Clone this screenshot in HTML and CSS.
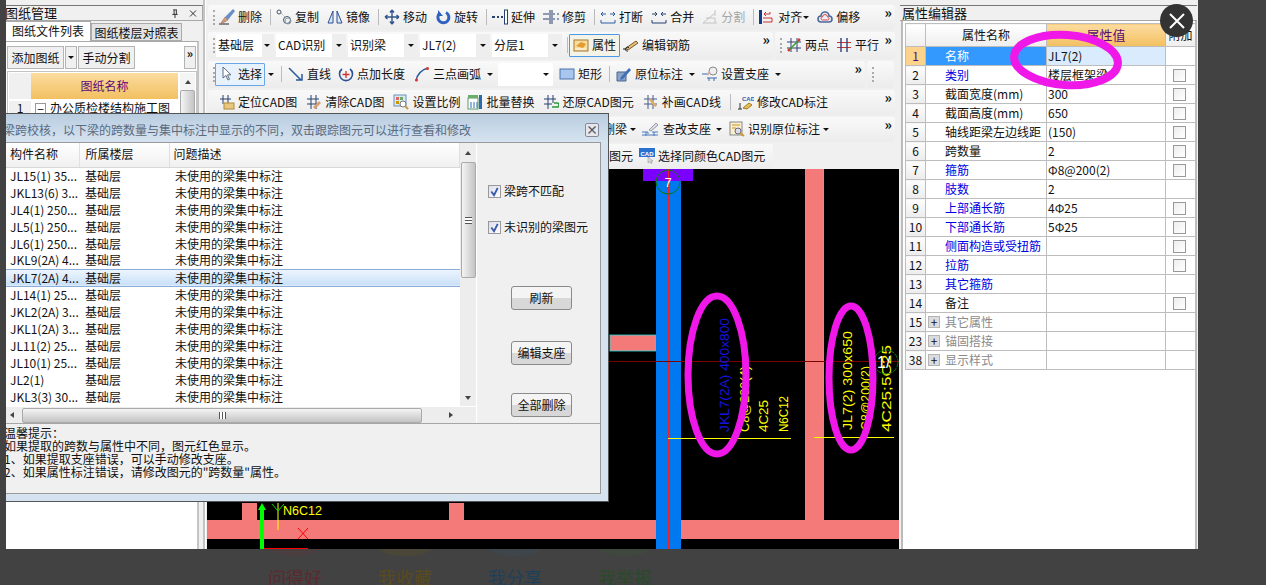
FILE: index.html
```html
<!DOCTYPE html>
<html>
<head>
    <link rel="stylesheet" href="styles.css">
</head>
<body>
    <!-- icon sprite -->
    <svg class="sprite">
        <symbol id="i-del" viewBox="0 0 16 16"><path d="M0 15h10" stroke="#223" fill="none"/><path d="M2 14l4-6 3 3-5 3z" fill="#c9a070" stroke="#a55"  stroke-width=".5"/><path d="M6 8l8-8 2 2-7 9z" fill="#6a8fc8"/></symbol>
        <symbol id="i-copy" viewBox="0 0 16 16"><circle cx="3" cy="3" r="2" fill="none" stroke="#456"/><circle cx="11" cy="11" r="3.500" fill="none" stroke="#456"/><circle cx="12" cy="12" r="3" fill="none" stroke="#89a"/><path d="M5 4l4 4" stroke="#89a" stroke-dasharray="1 1"/></symbol>
        <symbol id="i-mirror" viewBox="0 0 16 16"><path d="M6 2L1 14h5zM10 2l5 12h-5z" fill="#dde6f5" stroke="#2a4f96"/></symbol>
        <symbol id="i-move" viewBox="0 0 16 16"><path d="M8 1v14M1 8h14M8 1L6 3.500M8 1l2 2.500M8 15l-2-2.500M8 15l2-2.500M1 8l2.500-2M1 8l2.500 2M15 8l-2.500-2M15 8l-2.500 2" stroke="#31548a" stroke-width="1.400" fill="none"/></symbol>
        <symbol id="i-rotate" viewBox="0 0 16 16"><path d="M5 4a5.500 5.500 0 1 0 6-.5" stroke="#2f62c0" stroke-width="3" fill="none"/><path d="M3 1v6h5z" fill="#2f62c0"/></symbol>
        <symbol id="i-extend" viewBox="0 0 16 16"><path d="M0 8h3M5 8h2M9 8h2" stroke="#27406e" stroke-width="2"/><rect x="12.500" y="1" width="3" height="14" fill="#fff" stroke="#27406e"/></symbol>
        <symbol id="i-trim" viewBox="0 0 16 16"><path d="M0 5h6M0 10h6M10 5h2M14 5h2M10 10h2M14 10h2" stroke="#27406e"/><path d="M7 1v14M9 1v14" stroke="#27406e"/></symbol>
        <symbol id="i-break" viewBox="0 0 16 16"><path d="M1 11v3h14v-3M1 5h5M10 5h5M3 3L1 5l2 2M13 3l2 2-2 2" stroke="#2a5ca8" fill="none"/></symbol>
        <symbol id="i-merge" viewBox="0 0 16 16"><path d="M1 11v3h14v-3M1 5h5M10 5h5M4 3l2 2-2 2M12 3l-2 2 2 2" stroke="#27406e" fill="none"/></symbol>
        <symbol id="i-split" viewBox="0 0 16 16"><path d="M1 14h14M1 14l12-10M4 9h9v5M13 1v6" stroke="#c4c4c4" fill="none"/></symbol>
        <symbol id="i-align" viewBox="0 0 16 16"><path d="M1.500 1v14" stroke="#123a8a" stroke-width="3"/><path d="M5 5h6v-2M5 5l2-2M5 5l2 2M4 13h9V9H4" stroke="#c33" fill="none"/></symbol>
        <symbol id="i-offset" viewBox="0 0 16 16"><path d="M4 13a3 3 0 0 1 0-6 4 4 0 0 1 8 0 3 3 0 0 1 0 6z" fill="#eaf0f8" stroke="#4a6a9a" stroke-width="1.600"/><path d="M5.500 11a1.500 1.500 0 0 1 0-3 2.500 2.500 0 0 1 5 0 1.500 1.500 0 0 1 0 3z" fill="none" stroke="#d44"/></symbol>
        <symbol id="i-attr" viewBox="0 0 16 16"><rect x="1" y="3" width="14" height="11" fill="#f6dc9e" stroke="#a9772c"/><path d="M3 9l5-4 5 2-3 4z" fill="#e49a2c"/><path d="M2 12h11" stroke="#fff"/></symbol>
        <symbol id="i-rebar" viewBox="0 0 16 16"><path d="M0 12h4" stroke="#222"/><path d="M3 11l10-7 2 2-10 7z" fill="#e6c07a" stroke="#7a5a2a"/><path d="M5 14a2 2 0 1 1 1-3" fill="none" stroke="#222"/></symbol>
        <symbol id="i-two" viewBox="0 0 16 16"><path d="M1 5h14M1 11h14M5 1v14M11 1v14" stroke="#30417a"/><path d="M2 14L14 2" stroke="#3a9a2a" stroke-width="1.500"/><circle cx="3" cy="13" r="1.400" fill="#d33"/><circle cx="13" cy="3" r="1.400" fill="#d33"/></symbol>
        <symbol id="i-parallel" viewBox="0 0 16 16"><path d="M1 5.500h14M1 10.500h14" stroke="#c33"/><path d="M5 1v14M11 1v14" stroke="#30417a" stroke-width="1.400"/></symbol>
        <symbol id="i-cursor" viewBox="0 0 16 16"><path d="M1 1v11l3-2.500 2 4.500 1.500-.7-2-4.500H9z" fill="#fff" stroke="#5c6a80"/></symbol>
        <symbol id="i-line" viewBox="0 0 16 16"><path d="M1 2l12 12M14 8v6H8" stroke="#2a5a9a" stroke-width="1.500" fill="none"/></symbol>
        <symbol id="i-addlen" viewBox="0 0 16 16"><path d="M4 3a6.500 6.500 0 1 0 8 0" stroke="#2a4f96" stroke-width="1.600" fill="none"/><path d="M8 5v7M4.500 8.500h7" stroke="#c33" stroke-width="1.300"/></symbol>
        <symbol id="i-arc" viewBox="0 0 16 16"><path d="M2 15C3 8 7 4 14 2" stroke="#2a5a9a" stroke-width="1.500" fill="none"/><circle cx="2.500" cy="14" r="1.500" fill="#d33"/><circle cx="13.500" cy="2.500" r="1.500" fill="#d33"/></symbol>
        <symbol id="i-rect" viewBox="0 0 16 16"><rect x="1" y="3" width="14" height="10" fill="#a9c6ee" stroke="#4a72b0"/></symbol>
        <symbol id="i-mark" viewBox="0 0 16 16"><path d="M1 6h9v9H1z" fill="#8aa4c8" stroke="#4a6490"/><path d="M5 11l8-9 2 2-8 9-3 1z" fill="#3f6fb8"/></symbol>
        <symbol id="i-support" viewBox="0 0 16 16"><path d="M0 8h6M5 12h10M7 12v3M12 12v3" stroke="#3a6ab0" fill="none"/><circle cx="11" cy="5" r="4" fill="#eee" stroke="#8a8a8a"/><path d="M5 9l3-3" stroke="#caa" stroke-width="2"/></symbol>
        <symbol id="i-locate" viewBox="0 0 16 16"><path d="M1 5h11M4 1v9M9 1v9" stroke="#27406e"/><rect x="5" y="9" width="10" height="6" fill="#e8c880" stroke="#b08a3a"/></symbol>
        <symbol id="i-clear" viewBox="0 0 16 16"><path d="M1 5h12M1 10h12M5 1v14M10 1v14" stroke="#27406e"/><path d="M7 13l6-6 2 2-6 6z" fill="#d8a070"/></symbol>
        <symbol id="i-scale" viewBox="0 0 16 16"><rect x="1" y="1" width="12" height="11" fill="#dbe8f6" stroke="#6a8fb8"/><rect x="3" y="3" width="3" height="3" fill="#d66"/><rect x="7" y="3" width="3" height="3" fill="#6a6"/><rect x="3" y="7" width="3" height="3" fill="#c90"/><circle cx="10" cy="10" r="3" fill="#fff" stroke="#777"/><path d="M12 12l3 3" stroke="#c89a4a" stroke-width="2"/></symbol>
        <symbol id="i-batch" viewBox="0 0 16 16"><rect x="1" y="4" width="10" height="11" fill="#fff" stroke="#5a9a6a"/><path d="M4 8v6M7 8v6M10 8v6" stroke="#2a6ab0"/><path d="M1 1h10v3H1z" fill="#6ab06a"/><path d="M12 1h3v14h-3z" fill="#2a6ab0"/></symbol>
        <symbol id="i-restore" viewBox="0 0 16 16"><path d="M1 5h12M1 10h8M5 1v14M10 1v8" stroke="#27406e"/><path d="M9 13h5a2 2 0 0 0 0-4h-3" stroke="#2a9a3a" stroke-width="1.600" fill="none"/></symbol>
        <symbol id="i-patch" viewBox="0 0 16 16"><path d="M1 5h13M1 10h13M5 1v14M10 1v14" stroke="#4a5a8a"/><path d="M6 6l6 7 2-1-6-7z" fill="#e0b060"/></symbol>
        <symbol id="i-cadmark" viewBox="0 0 16 16"><text x="4" y="7" class="tiny">CAD</text><path d="M2 9v6M0 15h4" stroke="#333"/><path d="M5 14l6-5 3 2-5 4z" fill="#e8c050" stroke="#a07a20"/></symbol>
        <symbol id="i-check" viewBox="0 0 16 16"><path d="M0 11h6v2M10 11h6M4 11v4M12 11v4M0 14h16" stroke="#4a7ac0" fill="none"/><path d="M7 9l7-7 2 2-7 6z" fill="#dde" stroke="#999"/></symbol>
        <symbol id="i-ident" viewBox="0 0 16 16"><rect x="1" y="1" width="12" height="13" fill="#f8f0d0" stroke="#888"/><path d="M3 4h8M3 7h4" stroke="#d09020"/><circle cx="9" cy="10" r="3" fill="#dde" stroke="#667"/><path d="M11 12l4 3" stroke="#c89a30" stroke-width="2"/></symbol>
        <symbol id="i-samecolor" viewBox="0 0 16 16"><rect x="0" y="0" width="16" height="9" fill="#2a70d0"/><text x="1.500" y="7.500" class="tiny white">CAD</text><path d="M9 9v6l2-1.500 1 2 1-.5-1-2h2z" fill="#ddd" stroke="#888" stroke-width=".5"/></symbol>
    </svg>

    <div class="viewer">
        <!-- left panel -->
        <div class="left-panel">
            <div class="panel-title">
                <span class="title-text">图纸管理</span>
                <span class="title-btns">
                    <svg class="pin" viewBox="0 0 8 10"><path d="M2 1h4M3 1v5M5.500 1v5M1 6h6M4 6v4" stroke="#222" fill="none"/></svg>
                    <svg class="pin" viewBox="0 0 8 8"><path d="M1 1l6 6M7 1L1 7" stroke="#333" fill="none"/></svg>
                </span>
            </div>
            <div class="tabs">
                <div class="tab active">图纸文件列表</div>
                <div class="tab">图纸楼层对照表</div>
            </div>
            <div class="left-body">
                <div class="left-tools">
                    <span class="left-btn">添加图纸</span>
                    <span class="left-btn drop"><i class="caret"></i></span>
                    <span class="left-btn">手动分割</span>
                    <span class="left-more">»</span>
                </div>
                <div class="sheet">
                    <div class="sheet-cols">
                        <div class="sheet-head">
                            <span class="sheet-corner"></span>
                            <span class="sheet-title">图纸名称</span>
                        </div>
                        <div class="sheet-row">
                            <span class="sheet-num">1</span>
                            <span class="tree-box">−</span>
                            <span>办公质检楼结构施工图</span>
                        </div>
                    </div>
                    <div class="sheet-scroll">
                        <i class="arrow up"></i>
                        <div class="sheet-thumb"></div>
                    </div>
                </div>
            </div>
        </div>
        <div class="split"></div>

        <!-- toolbars and drawing -->
        <div class="center">
            <div class="band row-1">
                <i class="grip"></i>
                <span class="tool"><svg class="ico"><use href="#i-del"/></svg>删除</span><i class="sep"></i>
                <span class="tool"><svg class="ico"><use href="#i-copy"/></svg>复制</span>
                <span class="tool"><svg class="ico"><use href="#i-mirror"/></svg>镜像</span><i class="sep"></i>
                <span class="tool"><svg class="ico"><use href="#i-move"/></svg>移动</span>
                <span class="tool"><svg class="ico"><use href="#i-rotate"/></svg>旋转</span><i class="sep"></i>
                <span class="tool"><svg class="ico"><use href="#i-extend"/></svg>延伸</span>
                <span class="tool"><svg class="ico"><use href="#i-trim"/></svg>修剪</span><i class="sep"></i>
                <span class="tool"><svg class="ico"><use href="#i-break"/></svg>打断</span>
                <span class="tool"><svg class="ico"><use href="#i-merge"/></svg>合并</span>
                <span class="tool off"><svg class="ico"><use href="#i-split"/></svg>分割</span><i class="sep"></i>
                <span class="tool"><svg class="ico"><use href="#i-align"/></svg>对齐<i class="caret"></i></span>
                <span class="tool"><svg class="ico"><use href="#i-offset"/></svg>偏移</span>
                <span class="more">»</span>
            </div>
            <div class="row-pair">
                <div class="band row-2a">
                    <i class="grip"></i>
                    <span class="combo first">基础层<i class="caret"></i></span>
                    <span class="combo">CAD识别<i class="caret"></i></span>
                    <span class="combo">识别梁<i class="caret"></i></span>
                    <span class="combo">JL7(2)<i class="caret"></i></span>
                    <span class="combo">分层1<i class="caret"></i></span>
                    <i class="sep"></i>
                    <span class="tool pressed"><svg class="ico"><use href="#i-attr"/></svg>属性</span>
                    <span class="tool"><svg class="ico"><use href="#i-rebar"/></svg>编辑钢筋</span>
                    <span class="more">»</span>
                </div>
                <div class="band row-2b">
                    <i class="grip"></i>
                    <span class="tool"><svg class="ico"><use href="#i-two"/></svg>两点</span>
                    <span class="tool"><svg class="ico"><use href="#i-parallel"/></svg>平行</span>
                    <span class="more">»</span>
                </div>
            </div>
            <div class="row-pair">
                <div class="band row-3a">
                    <i class="grip"></i>
                    <span class="tool select"><svg class="ico"><use href="#i-cursor"/></svg>选择</span>
                    <i class="caret solo"></i>
                    <i class="sep"></i>
                    <span class="tool"><svg class="ico"><use href="#i-line"/></svg>直线</span>
                    <span class="tool"><svg class="ico"><use href="#i-addlen"/></svg>点加长度</span>
                    <span class="tool arc-tool"><svg class="ico"><use href="#i-arc"/></svg>三点画弧<i class="caret"></i></span>
                    <span class="combo blank"><i class="caret"></i></span>
                    <span class="tool"><svg class="ico"><use href="#i-rect"/></svg>矩形</span><i class="sep"></i>
                    <span class="tool"><svg class="ico"><use href="#i-mark"/></svg>原位标注<i class="caret"></i></span>
                    <span class="tool"><svg class="ico"><use href="#i-support"/></svg>设置支座<i class="caret"></i></span>
                    <span class="more">»</span>
                </div>
                <div class="band row-3b"><i class="grip"></i></div>
            </div>
            <div class="band row-4">
                <span class="tool"><svg class="ico"><use href="#i-locate"/></svg>定位CAD图</span>
                <span class="tool"><svg class="ico"><use href="#i-clear"/></svg>清除CAD图</span>
                <span class="tool"><svg class="ico"><use href="#i-scale"/></svg>设置比例</span>
                <span class="tool batch-tool"><svg class="ico"><use href="#i-batch"/></svg>批量替换</span>
                <span class="tool"><svg class="ico"><use href="#i-restore"/></svg>还原CAD图元</span>
                <span class="tool"><svg class="ico"><use href="#i-patch"/></svg>补画CAD线</span><i class="sep"></i>
                <span class="tool cad-tool"><svg class="ico"><use href="#i-cadmark"/></svg>修改CAD标注</span>
                <span class="more">»</span>
            </div>
            <div class="band row-5">
                <span class="tool">删梁<i class="caret"></i></span>
                <span class="tool"><svg class="ico"><use href="#i-check"/></svg>查改支座<i class="caret"></i></span>
                <span class="tool"><svg class="ico"><use href="#i-ident"/></svg>识别原位标注<i class="caret"></i></span>
                <span class="more">»</span>
            </div>
            <div class="band row-6">
                <span class="tool">图元</span>
                <span class="tool"><svg class="ico"><use href="#i-samecolor"/></svg>选择同颜色CAD图元</span>
            </div>

            <svg class="drawing" viewBox="207 169 692 380">
                <rect x="207" y="169" width="692" height="380" fill="#000"/>
                <rect x="610" y="335" width="46" height="16" fill="#f47a7a" stroke="#22dddd" stroke-width=".8"/>
                <rect x="207" y="520" width="692" height="19" fill="#f47a7a"/>
                <rect x="242" y="503" width="15" height="17" fill="#f47a7a"/>
                <rect x="449" y="503" width="15" height="17" fill="#f47a7a"/>
                <rect x="805" y="169" width="19" height="351" fill="#f47a7a"/>
                <path d="M805.500 169V520M823.500 169V420" stroke="#22dddd" stroke-width=".8"/>
                <rect x="656" y="169" width="25" height="380" fill="#0078f0"/>
                <rect x="643" y="169" width="50" height="12" fill="#7a00ff"/>
                <path d="M668.500 169V549" stroke="#f02020"/>
                <path d="M207 361.500H899" stroke="#7a0000"/>
                <circle cx="668" cy="182" r="12" fill="none" stroke="#0a7a0a"/>
                <text x="668" y="187" class="cad white-txt" text-anchor="middle">7</text>
                <path d="M668 438.500H791M814 437.500H894" stroke="#ffff00"/>
                <text transform="translate(729 432) rotate(-90)" class="cad" fill="#1414e0" textLength="114" lengthAdjust="spacingAndGlyphs">JKL7(2A) 400x800</text>
                <text transform="translate(749 432) rotate(-90)" class="cad" fill="#ffff00" textLength="66" lengthAdjust="spacingAndGlyphs">C8@200(4)</text>
                <text transform="translate(768 432) rotate(-90)" class="cad" fill="#ffff00" textLength="32" lengthAdjust="spacingAndGlyphs">4C25</text>
                <text transform="translate(788 432) rotate(-90)" class="cad" fill="#ffff00" textLength="36" lengthAdjust="spacingAndGlyphs">N6C12</text>
                <text transform="translate(852 430) rotate(-90)" class="cad" fill="#ffff00" textLength="99" lengthAdjust="spacingAndGlyphs">JL7(2) 300x650</text>
                <text transform="translate(870 430) rotate(-90)" class="cad" fill="#ffff00" textLength="64" lengthAdjust="spacingAndGlyphs">C8@200(2)</text>
                <text transform="translate(891 432) rotate(-90)" class="cad" fill="#ffff00" textLength="87" lengthAdjust="spacingAndGlyphs">4C25;5C25</text>
                <circle cx="886" cy="362" r="12" fill="none" stroke="#0a7a0a" stroke-dasharray="5 1"/>
                <text x="877" y="368" class="cad white-txt big">1/</text>
                <ellipse cx="717" cy="375" rx="29" ry="79" fill="none" stroke="#f018e8" stroke-width="7"/>
                <ellipse cx="851" cy="378" rx="22" ry="72" fill="none" stroke="#f018e8" stroke-width="7"/>
                <path d="M262 549V510" stroke="#00ff00" stroke-width="4"/>
                <path d="M262 503l-4 7h8z" fill="#00ff00"/>
                <path d="M278 503v27" stroke="#ffff00"/>
                <path d="M272 504l6 7 6-7" stroke="#00e000" fill="none"/>
                <text x="283" y="515" class="cad" fill="#ffff00" textLength="39" lengthAdjust="spacingAndGlyphs">N6C12</text>
                <path d="M298 528l10 11M308 528l-10 11M264 548.500H308" stroke="#ff0000" fill="none"/>
            </svg>
        </div>

        <!-- property editor -->
        <div class="props">
            <div class="panel-title">属性编辑器</div>
            <div class="props-body">
                <table class="prop-table">
                    <tr class="prop-head"><th></th><th>属性名称</th><th class="head-on">属性值</th><th>附加</th></tr>
                    <tr class="row-on"><td class="num">1</td><td class="name">名称</td><td>JL7(2)</td><td></td></tr>
                    <tr><td class="num">2</td><td class="name link">类别</td><td>楼层框架梁</td><td><i class="box"></i></td></tr>
                    <tr><td class="num">3</td><td class="name">截面宽度(mm)</td><td>300</td><td><i class="box"></i></td></tr>
                    <tr><td class="num">4</td><td class="name">截面高度(mm)</td><td>650</td><td><i class="box"></i></td></tr>
                    <tr><td class="num">5</td><td class="name">轴线距梁左边线距</td><td>(150)</td><td><i class="box"></i></td></tr>
                    <tr><td class="num">6</td><td class="name">跨数量</td><td>2</td><td><i class="box"></i></td></tr>
                    <tr><td class="num">7</td><td class="name link">箍筋</td><td>Φ8@200(2)</td><td><i class="box"></i></td></tr>
                    <tr><td class="num">8</td><td class="name link">肢数</td><td>2</td><td></td></tr>
                    <tr><td class="num">9</td><td class="name link">上部通长筋</td><td>4Φ25</td><td><i class="box"></i></td></tr>
                    <tr><td class="num">10</td><td class="name link">下部通长筋</td><td>5Φ25</td><td><i class="box"></i></td></tr>
                    <tr><td class="num">11</td><td class="name link">侧面构造或受扭筋</td><td></td><td><i class="box"></i></td></tr>
                    <tr><td class="num">12</td><td class="name link">拉筋</td><td></td><td><i class="box"></i></td></tr>
                    <tr><td class="num">13</td><td class="name link">其它箍筋</td><td></td><td></td></tr>
                    <tr><td class="num">14</td><td class="name">备注</td><td></td><td><i class="box"></i></td></tr>
                    <tr><td class="num">15</td><td class="name group"><i class="plus">+</i>其它属性</td><td></td><td></td></tr>
                    <tr><td class="num">23</td><td class="name group"><i class="plus">+</i>锚固搭接</td><td></td><td></td></tr>
                    <tr><td class="num">38</td><td class="name group"><i class="plus">+</i>显示样式</td><td></td><td></td></tr>
                </table>
            </div>
            <svg class="ring" viewBox="0 0 124 70"><ellipse cx="62" cy="35" rx="52" ry="25" transform="rotate(4 62 35)" fill="none" stroke="#f018e8" stroke-width="8"/></svg>
        </div>

        <!-- check dialog -->
        <div class="dialog">
            <div class="dialog-title">
                <span>梁跨校核，以下梁的跨数量与集中标注中显示的不同，双击跟踪图元可以进行查看和修改</span>
                <span class="dialog-close">×</span>
            </div>
            <div class="dialog-frame">
                <div class="dialog-main">
                    <div class="list-wrap">
                        <div class="list-area">
                            <table class="beam-list">
                                <tr class="list-head"><th>构件名称</th><th>所属楼层</th><th>问题描述</th></tr>
                                <tr><td>JL15(1) 35...</td><td>基础层</td><td>未使用的梁集中标注</td></tr>
                                <tr><td>JKL13(6) 3...</td><td>基础层</td><td>未使用的梁集中标注</td></tr>
                                <tr><td>JL4(1) 250...</td><td>基础层</td><td>未使用的梁集中标注</td></tr>
                                <tr><td>JL5(1) 250...</td><td>基础层</td><td>未使用的梁集中标注</td></tr>
                                <tr><td>JL6(1) 250...</td><td>基础层</td><td>未使用的梁集中标注</td></tr>
                                <tr><td>JKL9(2A) 4...</td><td>基础层</td><td>未使用的梁集中标注</td></tr>
                                <tr class="picked"><td>JKL7(2A) 4...</td><td>基础层</td><td>未使用的梁集中标注</td></tr>
                                <tr><td>JL14(1) 25...</td><td>基础层</td><td>未使用的梁集中标注</td></tr>
                                <tr><td>JKL2(2A) 3...</td><td>基础层</td><td>未使用的梁集中标注</td></tr>
                                <tr><td>JKL1(2A) 3...</td><td>基础层</td><td>未使用的梁集中标注</td></tr>
                                <tr><td>JL11(2) 25...</td><td>基础层</td><td>未使用的梁集中标注</td></tr>
                                <tr><td>JL10(1) 25...</td><td>基础层</td><td>未使用的梁集中标注</td></tr>
                                <tr><td>JL2(1)</td><td>基础层</td><td>未使用的梁集中标注</td></tr>
                                <tr><td>JKL3(3) 30...</td><td>基础层</td><td>未使用的梁集中标注</td></tr>
                            </table>
                            <div class="v-scroll">
                                <i class="arrow up"></i>
                                <div class="v-thumb"><i class="v-grip"></i></div>
                                <i class="arrow down"></i>
                            </div>
                        </div>
                        <div class="h-scroll">
                            <i class="arrow left"></i>
                            <div class="h-thumb"><i class="h-grip"></i></div>
                            <i class="arrow right"></i>
                        </div>
                    </div>
                    <div class="dialog-side">
                        <label class="check first"><i class="tick"><svg viewBox="0 0 12 12"><path d="M2.500 6l3 4 4-8" stroke="#3a5aa8" stroke-width="2" fill="none"/></svg></i>梁跨不匹配</label>
                        <label class="check"><i class="tick"><svg viewBox="0 0 12 12"><path d="M2.500 6l3 4 4-8" stroke="#3a5aa8" stroke-width="2" fill="none"/></svg></i>未识别的梁图元</label>
                        <span class="side-btn refresh">刷新</span>
                        <span class="side-btn edit">编辑支座</span>
                        <span class="side-btn clear">全部删除</span>
                    </div>
                </div>
                <div class="hint">
                    <div>温馨提示：</div>
                    <div>如果提取的跨数与属性中不同，图元红色显示。</div>
                    <div>1、如果提取支座错误，可以手动修改支座。</div>
                    <div>2、如果属性标注错误，请修改图元的"跨数量"属性。</div>
                </div>
            </div>
        </div>
    </div>

    <!-- page behind the picture -->
    <div class="behind">
        <div class="act act-good"><i></i>问得好</div>
        <div class="act act-fav"><i></i>我收藏</div>
        <div class="act act-share"><i></i>我分享</div>
        <div class="act act-report"><i></i>我举报</div>
    </div>

    <div class="close-btn"><svg viewBox="0 0 16 16"><path d="M1 1l14 14M15 1L1 15" stroke="#fff" stroke-width="2"/></svg></div>
</body>
</html>
```

FILE: styles.css
```css
* {
    box-sizing: border-box;
}

body {
    margin: 0;
    height: 585px;
    overflow: hidden;
    background: #424242;
    font-family: "Noto Sans CJK SC", "Liberation Sans", sans-serif;
    font-size: 12px;
    line-height: 14px;
    color: #111;
    position: relative;
}

i {
    font-style: normal;
}

.sprite {
    display: none;
}

.tiny {
    font-family: "Liberation Sans", sans-serif;
    font-size: 6px;
    font-weight: bold;
    fill: #2a5ab0;
}

.tiny.white {
    fill: #fff;
}

.viewer {
    position: relative;
    margin-left: 6px;
    width: 1192px;
    height: 549px;
    overflow: hidden;
    display: flex;
    background: #f0f0f0;
}

/* left panel */
.left-panel {
    width: 197px;
    padding-top: 5px;
    display: flex;
    flex-direction: column;
}

.panel-title {
    height: 16px;
    display: flex;
    justify-content: space-between;
    align-items: center;
    border: 1px solid #a8a8a8;
    border-top-color: #777;
    border-left: none;
    font-size: 13px;
    background: #f0f0f0;
}

.title-text {
    margin-left: -1px;
}

.title-btns {
    display: flex;
    gap: 10px;
    padding-right: 5px;
}

.pin {
    width: 8px;
    height: 9px;
}

.tabs {
    display: flex;
    height: 20px;
    align-items: flex-end;
}

.tab {
    height: 18px;
    width: 91px;
    border: 1px solid #aaa;
    background: #e4e4e4;
    text-align: center;
    line-height: 17px;
    white-space: nowrap;
}

.tab.active {
    width: 85px;
    height: 20px;
    background: #fff;
    border-bottom: none;
    border-left: none;
}

.left-body {
    flex: 1;
    background: #fff;
    border-right: 2px solid #c4c4c4;
    margin-right: 4px;
    border-top: 1px solid #aaa;
    padding: 4px 0 0 1px;
}

.left-tools {
    height: 23px;
    display: flex;
    gap: 1px;
    position: relative;
}

.left-btn {
    width: 57px;
    background: #f0f0f0;
    border: 1px solid #b4b4b4;
    display: flex;
    align-items: center;
    justify-content: center;
}

.left-btn.drop {
    width: 12px;
}

.left-btn .caret {
    margin-left: 0;
}

.left-more {
    position: absolute;
    right: 1px;
    top: 0;
    width: 12px;
    height: 23px;
    text-align: center;
    font-weight: bold;
    background: #f0f0f0;
    border: 1px solid #b4b4b4;
    line-height: 12px;
}

.sheet {
    margin-top: 2px;
    border: 1px solid #c4c4c4;
    padding: 1px 1px 1px 1px;
    display: flex;
    gap: 2px;
    height: 46px;
}

.sheet-cols {
    width: 171px;
}

.sheet-head {
    display: flex;
    height: 26px;
}

.sheet-corner {
    width: 22px;
    background: #f0f0f0;
}

.sheet-title {
    flex: 1;
    display: flex;
    align-items: center;
    justify-content: center;
    background: linear-gradient(#fcdca0, #f2c060);
    color: #5c0a78;
}

.sheet-scroll {
    width: 15px;
    display: flex;
    flex-direction: column;
    align-items: center;
    background: #f4f4f4;
}

.sheet-thumb {
    margin-top: 6px;
    width: 15px;
    height: 30px;
    border: 1px solid #aaa;
    border-radius: 2px;
    background: linear-gradient(90deg, #f4f4f4, #c4c4c4);
}

.sheet-row {
    display: flex;
    align-items: center;
    gap: 4px;
    height: 18px;
}

.sheet-num {
    width: 22px;
    text-align: center;
    background: #f0f0f0;
}

.tree-box {
    width: 11px;
    height: 11px;
    border: 1px solid #999;
    line-height: 9px;
    text-align: center;
}

.split {
    width: 3px;
    background: linear-gradient(90deg, #c4c4c4 66%, #fff 66%);
}

/* toolbars */
.center {
    width: 694px;
    padding: 5px 0 0 2px;
    display: flex;
    flex-direction: column;
}

.band {
    display: flex;
    align-items: center;
    gap: 8px;
    height: 25px;
    margin-bottom: 2px;
    padding: 0 0 1px 11px;
    width: 687px;
    background: linear-gradient(#f9f9f9, #ececec);
    border-radius: 3px;
    position: relative;
    white-space: nowrap;
    flex-shrink: 0;
}

.row-pair {
    display: flex;
    gap: 2px;
    height: 27px;
    margin-bottom: 2px;
    flex-shrink: 0;
}

.row-pair .band {
    height: 27px;
    margin-bottom: 0;
}

.row-1 {
    padding-left: 5px;
}

.row-1 .grip {
    margin-right: -4px;
}

.row-2a {
    width: 565px;
    gap: 2px;
    padding-left: 5px;
}

.row-2b {
    width: 120px;
    padding-left: 5px;
    gap: 7px;
}

.row-3a {
    width: 657px;
    padding-left: 5px;
    gap: 7px;
}

.row-3b {
    width: 27px;
    padding-left: 5px;
}

.row-4 {
    gap: 9px;
}

.batch-tool {
    margin-left: -2px;
}

.cad-tool {
    gap: 1px;
}

.row-5 {
    padding-left: 395px;
    gap: 7px;
}

.row-5 .caret {
    margin-left: 0;
}

.row-5 .tool:nth-child(2) {
    gap: 5px;
    margin-left: -1px;
}

.row-6 {
    width: 565px;
    margin-bottom: 0;
    padding-left: 401px;
    gap: 6px;
}

.grip {
    width: 2px;
    height: 15px;
    margin-right: -3px;
    border-left: 2px dotted #aaa;
}

.sep {
    width: 1px;
    height: 16px;
    background: #bbb;
    margin-right: -3px;
}

.row-3a .sep {
    margin-right: -1px;
}

.row-4 .sep {
    margin-right: -2px;
}

.tool {
    display: inline-flex;
    align-items: center;
    gap: 3px;
}

.tool.off {
    color: #a6a6a6;
}

.arc-tool {
    margin-left: 2px;
}

.ico {
    width: 16px;
    height: 16px;
    flex-shrink: 0;
}

.caret {
    display: inline-block;
    width: 0;
    height: 0;
    margin-left: 3px;
    border-left: 3px solid transparent;
    border-right: 3px solid transparent;
    border-top: 3px solid #111;
}

.row-1 .caret {
    margin-left: -2px;
}

.caret.solo {
    margin: 0 0 0 -4px;
}

.more {
    position: absolute;
    right: 3px;
    top: 1px;
    font-weight: bold;
    font-size: 14px;
    line-height: 12px;
}

.combo {
    display: flex;
    align-items: center;
    justify-content: space-between;
    width: 70px;
    height: 23px;
    padding-left: 2px;
    background: linear-gradient(90deg, #fff 80%, #eee 80%);
}

.combo.first {
    width: 58px;
    margin-left: 2px;
}

.combo.blank {
    width: 55px;
    justify-content: flex-end;
    margin: 0 -1px 0 -2px;
    background: #fff;
}

.combo .caret {
    margin: 0 4px 0 0;
}

.row-2a .sep {
    margin: 0 -1px 0 3px;
}

.pressed {
    width: 51px;
    height: 23px;
    padding-left: 3px;
    margin-right: 1px;
    border: 1px solid #4a9ae8;
    background: #f3f3e8;
    border-radius: 1px;
}

.select {
    width: 50px;
    height: 23px;
    padding-left: 6px;
    gap: 0;
    margin-left: -4px;
    border: 1px solid #6aa6e6;
    background: #e8f2fc;
    border-radius: 1px;
}

/* drawing */
.drawing {
    width: 692px;
    height: 380px;
    margin-left: -1px;
    flex-shrink: 0;
}

.cad {
    font-family: "Liberation Sans", sans-serif;
    font-size: 13px;
}

.white-txt {
    fill: #fff;
}

.cad.big {
    font-size: 16px;
}

/* property editor */
.props {
    position: relative;
    width: 298px;
    padding-top: 5px;
}

.props .panel-title {
    margin-right: 1px;
    padding-left: 2px;
    border-left: none;
    border-right: none;
    justify-content: flex-start;
}

.props-body {
    height: 528px;
    background: #fff;
    border: 1px solid #bbb;
    border-width: 0 2px 0 2px;
    margin: 0 1px;
    padding: 2px 0 0 2px;
}

.prop-table {
    border-collapse: collapse;
    table-layout: fixed;
    width: 291px;
}

.prop-table th,
.prop-table td {
    height: 19px;
    padding: 0 0 0 1px;
    border: 1px solid #bdbdbd;
    font-weight: normal;
    white-space: nowrap;
    overflow: hidden;
}

.prop-table th {
    height: 23px;
    text-align: center;
    background: linear-gradient(#fff, #eee);
    padding: 0;
}

.prop-table th:nth-child(1),
.prop-table td:nth-child(1) {
    width: 20px;
}

.prop-table th:nth-child(2),
.prop-table td:nth-child(2) {
    width: 121px;
}

.prop-table th:nth-child(3),
.prop-table td:nth-child(3) {
    width: 119px;
}

.prop-table .head-on {
    color: #5c0a78;
    background: linear-gradient(#fcdca0, #f2c060);
    font-size: 13px;
}

.prop-table .num {
    padding: 0;
    text-align: center;
    background: linear-gradient(#fdfdfd, #ececec);
}

.prop-table .name {
    padding-left: 19px;
}

.link {
    color: #0000e0;
}

.prop-table .group {
    position: relative;
    color: #8a8a8a;
}

.plus {
    position: absolute;
    left: 2px;
    top: 3px;
    width: 12px;
    height: 12px;
    line-height: 10px;
    text-align: center;
    color: #111;
    background: #dcdcdc;
    border: 1px solid #b4b4b4;
}

.row-on .num {
    background: #fbd38a;
    color: #5c0a78;
}

.prop-table .row-on .name {
    background: #3399ff;
    color: #fff;
}

.row-on td:nth-child(3) {
    background: #d9ebfc;
}

.box {
    display: block;
    width: 13px;
    height: 13px;
    margin-left: 6px;
    border: 1px solid #999;
    background: linear-gradient(135deg, #eee, #fff);
}

.ring {
    position: absolute;
    left: 104px;
    top: 25px;
    width: 124px;
    height: 70px;
}

/* check dialog */
.dialog {
    position: absolute;
    left: -8px;
    top: 113px;
    width: 611px;
    height: 389px;
    background: #d5e2f0;
    border: 1px solid #555;
    border-left: none;
    padding: 0 7px 0 8px;
    display: flex;
    flex-direction: column;
}

.dialog-title {
    height: 28px;
    margin: 0 -7px 0 -8px;
    padding: 4px 9px 0 5px;
    display: flex;
    align-items: center;
    justify-content: space-between;
    background: linear-gradient(#b9cde0, #d6e3f0);
    color: #5a6a80;
    font-size: 12px;
}

.dialog-close {
    width: 14px;
    height: 14px;
    border: 1px solid #889;
    border-radius: 2px;
    line-height: 11px;
    text-align: center;
    font-size: 12px;
    font-weight: bold;
    color: #556;
    background: #e4e8ee;
}

.dialog-frame {
    width: 595px;
    height: 352px;
    margin-left: 0;
    background: #f0f0f0;
    border: 1px solid #9a9a9a;
    border-left: none;
    display: flex;
    flex-direction: column;
}

.dialog-main {
    display: flex;
    height: 281px;
    border-bottom: 1px solid #a6a6a6;
}

.list-wrap {
    width: 471px;
    background: #fff;
    border-right: 1px solid #fff;
}

.list-area {
    display: flex;
    height: 263px;
}

.beam-list {
    width: 455px;
    height: 24px;
    border-collapse: collapse;
    table-layout: fixed;
    align-self: flex-start;
}

.beam-list th {
    height: 24px;
    padding: 0 0 2px 4px;
    text-align: left;
    font-weight: normal;
    background: linear-gradient(#fff, #f0f0f0);
    border-bottom: 1px solid #d8d8d8;
    border-right: 1px solid #e0e0e0;
}

.beam-list th:nth-child(1) {
    width: 73px;
}

.beam-list th:nth-child(2) {
    width: 90px;
    padding-left: 6px;
}

.beam-list td {
    height: 17px;
    padding: 0 0 0 4px;
    white-space: nowrap;
}

.beam-list td:nth-child(2) {
    padding-left: 6px;
}

.beam-list td:nth-child(3) {
    padding-left: 6px;
}

.picked td {
    background: linear-gradient(#eef5fd, #c8e0f8);
    border-top: 1px solid #8aaed8;
    border-bottom: 1px solid #8aaed8;
}

.v-scroll {
    width: 16px;
    display: flex;
    flex-direction: column;
    align-items: center;
    background: #ededed;
    position: relative;
}

.arrow {
    width: 0;
    height: 0;
    border: 3px solid transparent;
}

.arrow.up {
    margin-top: 7px;
    border-bottom: 4px solid #444;
    border-top: none;
}

.v-scroll .arrow.up {
    margin-top: 8px;
}

.arrow.down {
    margin-top: 118px;
    border-top: 4px solid #444;
    border-bottom: none;
}

.v-thumb {
    margin-top: 7px;
    width: 15px;
    height: 116px;
    border: 1px solid #aaa;
    border-radius: 2px;
    background: linear-gradient(90deg, #f4f4f4, #c4c4c4);
    display: flex;
    align-items: center;
    justify-content: center;
}

.v-grip {
    width: 7px;
    height: 7px;
    border-top: 1px solid #555;
    border-bottom: 1px solid #555;
    background: linear-gradient(#fff 40%, #555 40%, #555 60%, #fff 60%);
}

.h-scroll {
    height: 16px;
    margin-top: 1px;
    display: flex;
    align-items: center;
    background: #ededed;
    position: relative;
}

.arrow.left {
    margin-left: 4px;
    border-right: 4px solid #444;
    border-left: none;
}

.arrow.right {
    margin-left: 27px;
    border-left: 4px solid #444;
    border-right: none;
}

.h-thumb {
    margin-left: 8px;
    width: 400px;
    height: 15px;
    border: 1px solid #aaa;
    border-radius: 2px;
    background: linear-gradient(#f4f4f4, #c4c4c4);
    display: flex;
    align-items: center;
    justify-content: center;
}

.h-grip {
    width: 7px;
    height: 7px;
    border-left: 1px solid #555;
    border-right: 1px solid #555;
    background: linear-gradient(90deg, #fff 40%, #555 40%, #555 60%, #fff 60%);
}

.dialog-side {
    flex: 1;
    display: flex;
    flex-direction: column;
    padding-left: 11px;
}

.check {
    display: flex;
    align-items: center;
    gap: 3px;
    height: 14px;
    margin-top: 22px;
}

.check.first {
    margin-top: 41px;
}

.tick {
    width: 13px;
    height: 13px;
    border: 1px solid #999;
    background: linear-gradient(135deg, #dde, #fff);
    flex-shrink: 0;
}

.tick svg {
    display: block;
}

.side-btn {
    display: flex;
    align-items: center;
    justify-content: center;
    width: 61px;
    height: 24px;
    margin-left: 23px;
    border: 1px solid #8a8a8a;
    border-radius: 3px;
    background: linear-gradient(#f4f4f4 50%, #d8d8d8 50%);
}

.refresh {
    margin-top: 52px;
}

.edit {
    margin-top: 31px;
}

.clear {
    margin-top: 28px;
}

.hint {
    margin-left: -2px;
    padding-top: 2px;
    line-height: 13px;
    white-space: nowrap;
}

/* page behind the picture */
.behind {
    display: flex;
    gap: 56px;
    padding-left: 268px;
}

.act {
    width: 54px;
    font-size: 18px;
    line-height: 24px;
    display: flex;
    flex-direction: column;
    align-items: center;
    white-space: nowrap;
}

.act i {
    width: 50px;
    height: 7px;
    margin-bottom: 9px;
    border-radius: 0 0 25px 25px / 0 0 7px 7px;
}

.act-good {
    color: #5a2a2e;
}

.act-good i {
    background: #4a3e40;
}

.act-fav {
    color: #5a4a20;
}

.act-fav i {
    background: #4a4638;
}

.act-share {
    color: #20405a;
}

.act-share i {
    background: #3e464c;
}

.act-report {
    color: #2a4a2a;
}

.act-report i {
    background: #3f473f;
}

.close-btn {
    position: absolute;
    left: 1160px;
    top: 4px;
    width: 33px;
    height: 33px;
    border-radius: 50%;
    background: #333;
    display: flex;
    align-items: center;
    justify-content: center;
}

.close-btn svg {
    width: 16px;
    height: 16px;
}
```
